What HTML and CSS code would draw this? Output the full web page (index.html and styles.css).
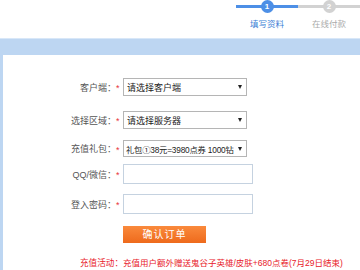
FILE: index.html
```html
<!DOCTYPE html>
<html>
<head>
    <meta charset="UTF-8">
    <title>充值</title>
    <link rel="stylesheet" href="styles.css">
</head>
<body>
    <div id="header">
        <div class="steps">
            <div class="step active">
                <div class="stepBar"><span class="stepNum">1</span></div>
                <div class="stepText">填写资料</div>
            </div>
            <div class="step">
                <div class="stepBar"><span class="stepNum">2</span></div>
                <div class="stepText">在线付款</div>
            </div>
        </div>
    </div>
    <div id="band"></div>
    <div id="panel">
        <div class="row rowClient">
            <div class="label">客户端：</div><span class="star">*</span>
            <div class="select"><span class="selectText">请选择客户端</span><span class="arrow"></span></div>
        </div>
        <div class="row rowArea">
            <div class="label">选择区域：</div><span class="star">*</span>
            <div class="select"><span class="selectText">请选择服务器</span><span class="arrow"></span></div>
        </div>
        <div class="row rowGift">
            <div class="label">充值礼包：</div><span class="star">*</span>
            <div class="select"><span class="selectText">礼包①38元=3980点券 1000钻</span><span class="arrow"></span></div>
        </div>
        <div class="row rowQQ">
            <div class="label">QQ/微信：</div><span class="star">*</span>
            <input class="textInput" type="text">
        </div>
        <div class="row rowPass">
            <div class="label">登入密码：</div><span class="star">*</span>
            <input class="textInput" type="password">
        </div>
        <div class="row rowButton">
            <div class="label"></div><span class="star"></span>
            <div class="button">确认订单</div>
        </div>
        <div class="row rowActivity">
            <div class="activityLabel">充值活动：</div>
            <div class="activityText">充值用户额外赠送鬼谷子英雄/皮肤+680点卷(7月29日结束)</div>
        </div>
    </div>
</body>
</html>
```

FILE: styles.css
```css
html, body {
    height:270px;
    overflow:hidden;
}
body {
    margin:0;
    background-color:white;
    font-family:"Liberation Sans", "Noto Sans CJK SC", sans-serif;
    font-size:9px;
    color:#333;
}
#header {
    height:38px;
    display:flex;
    justify-content:flex-end;
}
.steps {
    display:flex;
}
.step {
    width:62px;
}
.stepBar {
    position:relative;
    height:13px;
    display:flex;
    justify-content:center;
    align-items:center;
}
.stepBar::before {
    content:"";
    position:absolute;
    left:0;
    right:0;
    top:5px;
    height:3px;
    background-color:#d2d2d2;
}
.stepNum {
    position:relative;
    width:13px;
    height:13px;
    border-radius:50%;
    background-color:#d2d2d2;
    color:white;
    font-size:8px;
    font-weight:bold;
    line-height:13px;
    text-align:center;
}
.stepText {
    margin-top:4px;
    text-align:center;
    font-size:8.5px;
    color:#aaa;
}
.active .stepBar::before,
.active .stepNum {
    background-color:#4d8fe6;
}
.active .stepText {
    color:#3d7fd6;
}
#band {
    height:17px;
    background-color:#bdd6f2;
    border-top:1px solid #d8e7f8;
    box-sizing:border-box;
}
#panel {
    border-left:3px solid #bdd6f2;
    height:215px;
    overflow:hidden;
}
.row {
    display:flex;
    align-items:center;
}
.rowClient { margin-top:23px; }
.rowArea { margin-top:15px; }
.rowGift { margin-top:11px; }
.rowQQ { margin-top:7px; }
.rowPass { margin-top:10px; }
.rowButton { margin-top:12px; }
.rowActivity { margin-top:13px; }
.label {
    width:113px;
    text-align:right;
    color:#555;
}
.star {
    width:7px;
    color:#e8343c;
    padding-top:2px;
}
.select {
    width:124px;
    height:18px;
    box-sizing:border-box;
    border:1px solid #b5b5b5;
    display:flex;
    align-items:center;
    padding:0 4px 0 3px;
    background-color:white;
}
.rowGift .select {
    height:17px;
    padding-left:2px;
}
.selectText {
    flex:1;
    white-space:nowrap;
    color:#222;
}
.rowGift .selectText {
    font-size:8.3px;
    letter-spacing:-0.2px;
}
.arrow {
    margin-left:2px;
    width:0;
    height:0;
    border-left:2px solid transparent;
    border-right:2px solid transparent;
    border-top:4px solid #222;
}
.textInput {
    width:130px;
    height:20px;
    box-sizing:border-box;
    margin:0;
    border:1px solid #c5d2e0;
    padding:0 3px;
}
.button {
    width:83px;
    height:17px;
    background:linear-gradient(#fa8a3c, #ee6a1c);
    color:white;
    font-size:10px;
    letter-spacing:1px;
    line-height:17px;
    text-align:center;
}
.activityLabel {
    width:120px;
    text-align:right;
    color:#e8202a;
    font-size:8.6px;
}
.activityText {
    color:#e8202a;
    white-space:nowrap;
    font-size:8.5px;
}
```
